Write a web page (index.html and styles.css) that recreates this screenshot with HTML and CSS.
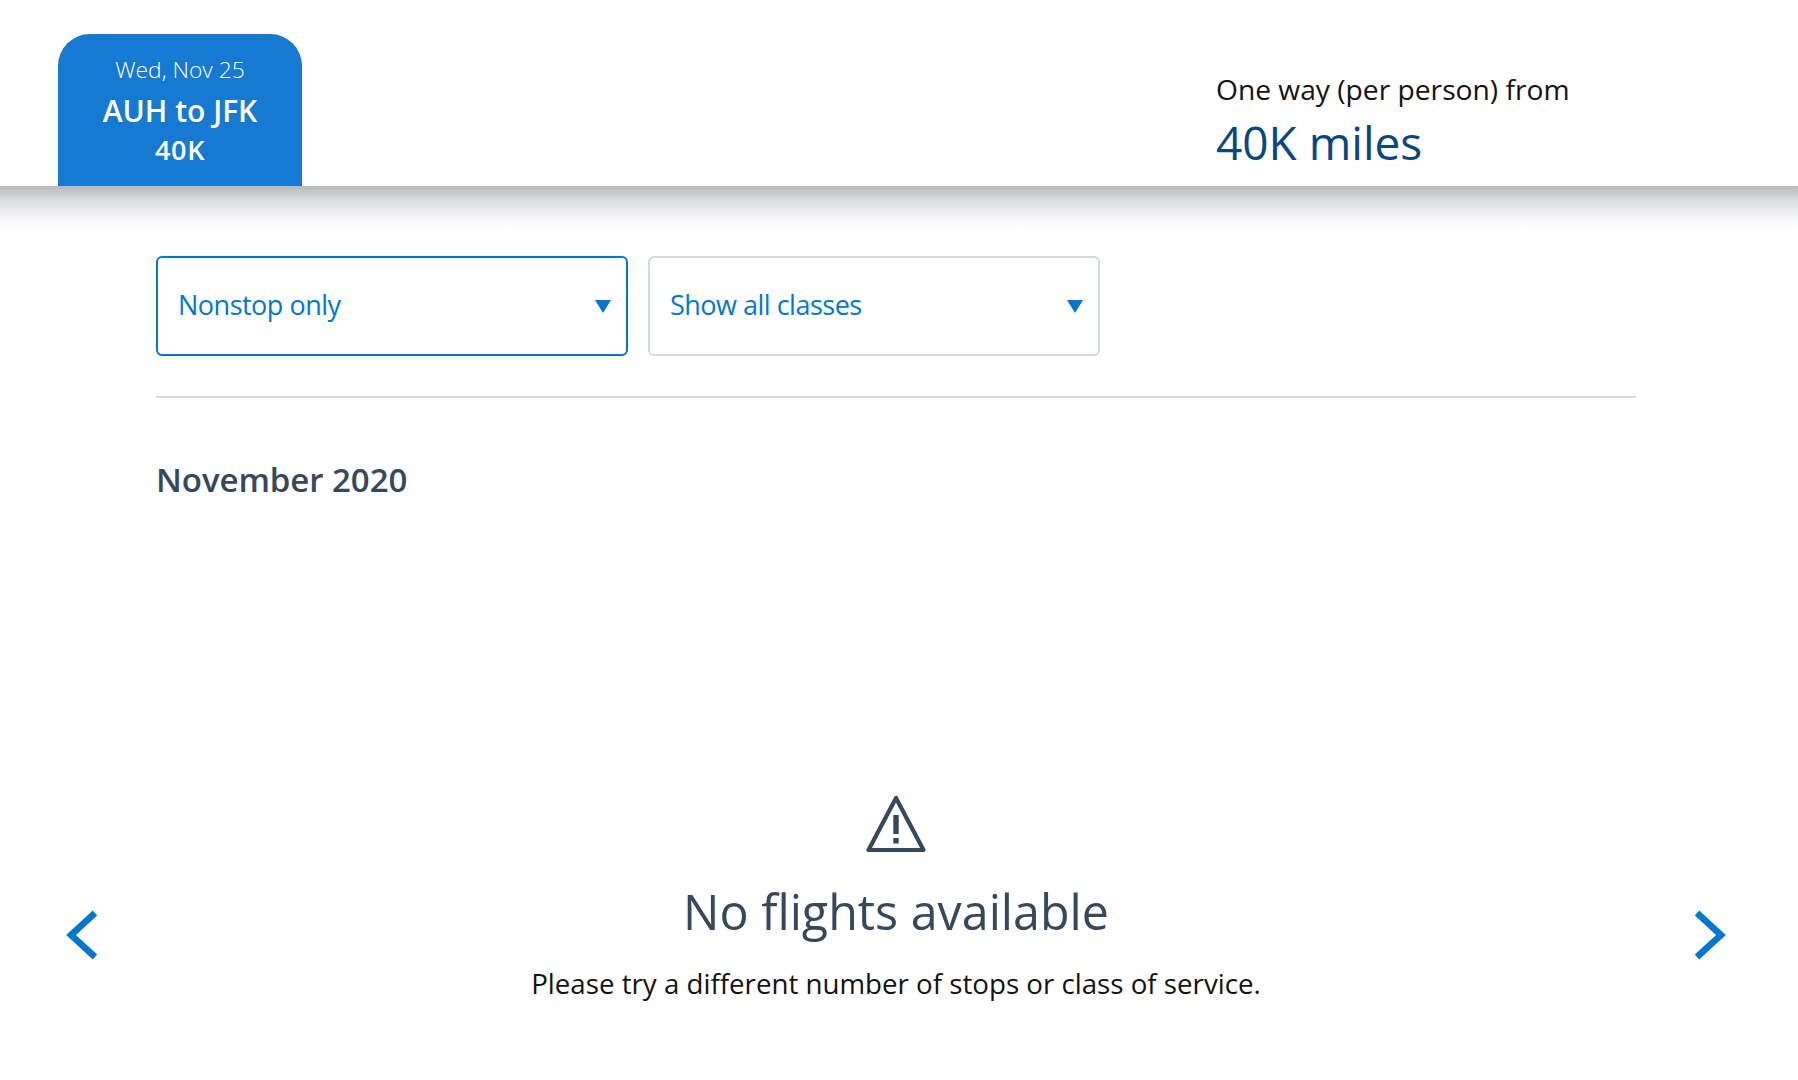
FILE: index.html
```html
<!DOCTYPE html>
<html lang="en">
<head>
<meta charset="utf-8">
<title>No flights available</title>
<link rel="stylesheet" href="styles.css">
</head>
<body>
<header class="topbar">
  <div class="tab">
    <div class="tab-date">Wed, Nov 25</div>
    <div class="tab-route">AUH to JFK</div>
    <div class="tab-price">40K</div>
  </div>
  <div class="fare">
    <div class="fare-label">One way (per person) from</div>
    <div class="fare-value">40K miles</div>
  </div>
</header>
<div class="shade"></div>
<main class="content">
  <div class="filters">
    <div class="select select-stops select-active"><span>Nonstop only</span><i class="caret"></i></div>
    <div class="select select-classes"><span>Show all classes</span><i class="caret"></i></div>
  </div>
  <hr class="rule">
  <h2 class="month">November 2020</h2>
  <section class="empty">
    <svg class="warn" width="60" height="58" viewBox="0 0 60 58" fill="none" stroke="#36495a" stroke-width="4.2" stroke-linejoin="round">
      <path d="M30 3 L2.5 55 H57.5 Z"/>
      <path d="M30 20 V39" stroke-width="5.4"/>
      <path d="M30 43 V48.5" stroke-width="5.4"/>
    </svg>
    <h1 class="empty-title">No flights available</h1>
    <p class="empty-text">Please try a different number of stops or class of service.</p>
  </section>
</main>
<svg class="arrow arrow-left" width="34" height="50" viewBox="0 0 34 50" fill="none" stroke="#0078d2" stroke-width="6.5"><path d="M30 3 L6 25 L30 47"/></svg>
<svg class="arrow arrow-right" width="34" height="50" viewBox="0 0 34 50" fill="none" stroke="#0078d2" stroke-width="6.5"><path d="M4 3 L28 25 L4 47"/></svg>
</body>
</html>
```
FILE: styles.css
```css
* { box-sizing: border-box; }
html, body { margin: 0; padding: 0; background: #fff; }
body { position: relative; height: 1080px; overflow: hidden; font-family: "Open Sans", "Noto Sans", sans-serif; color: #131313; }
.topbar { height: 186px; padding: 34px 0 0 58px; display: flex; justify-content: space-between; }
.tab { width: 244px; height: 152px; background: #167ad2; color: #fff; border-radius: 32px 32px 0 0; text-align: center; padding-top: 22px; }
.tab-date { font-size: 22.8px; line-height: 28px; font-weight: 300; }
.tab-route { font-size: 30px; line-height: 38px; margin-top: 8px; font-weight: 600; }
.tab-price { font-size: 27px; line-height: 32px; margin-top: 4px; font-weight: 600; letter-spacing: 0.7px; }
.fare { width: 582px; padding-top: 37px; }
.fare-label { font-size: 28.2px; line-height: 36px; }
.fare-value { font-size: 46px; line-height: 60px; color: #0b467f; margin-top: 5px; }
.shade { height: 44px; background: linear-gradient(#b6babd, #dcdfe1 35%, #f5f6f6 72%, #fff); }
.content { padding: 26px 162px 0 156px; }
.filters { display: flex; gap: 20px; }
.select { height: 100px; display: flex; align-items: center; justify-content: space-between; border: 2px solid #cfdbe4; border-radius: 6px; padding: 0 15px 4px 20px; color: #0078d2; font-size: 27px; letter-spacing: -0.5px; }
.select-stops { width: 472px; }
.select-classes { width: 452px; }
.select-active { border-color: #0078d2; }
.caret { width: 0; height: 0; border-left: 8px solid transparent; border-right: 8px solid transparent; border-top: 13px solid #0078d2; margin-top: 4px; }
.rule { margin: 40px 0 0; border: 0; height: 2px; background: #cfdbe4; }
.month { margin: 60px 0 0; font-size: 33px; line-height: 44px; font-weight: 600; color: #36495a; letter-spacing: -0.05px; }
.empty { margin-top: 293px; text-align: center; }
.warn { display: block; margin: 0 auto; }
.empty-title { margin: 26px 0 0; font-size: 48.4px; line-height: 64px; font-weight: 400; color: #36495a; }
.empty-text { margin: 22px 0 0; font-size: 27.7px; line-height: 36px; color: #131313; }
.arrow { position: absolute; top: 910px; }
.arrow-left { left: 65px; }
.arrow-right { left: 1693px; }
```
